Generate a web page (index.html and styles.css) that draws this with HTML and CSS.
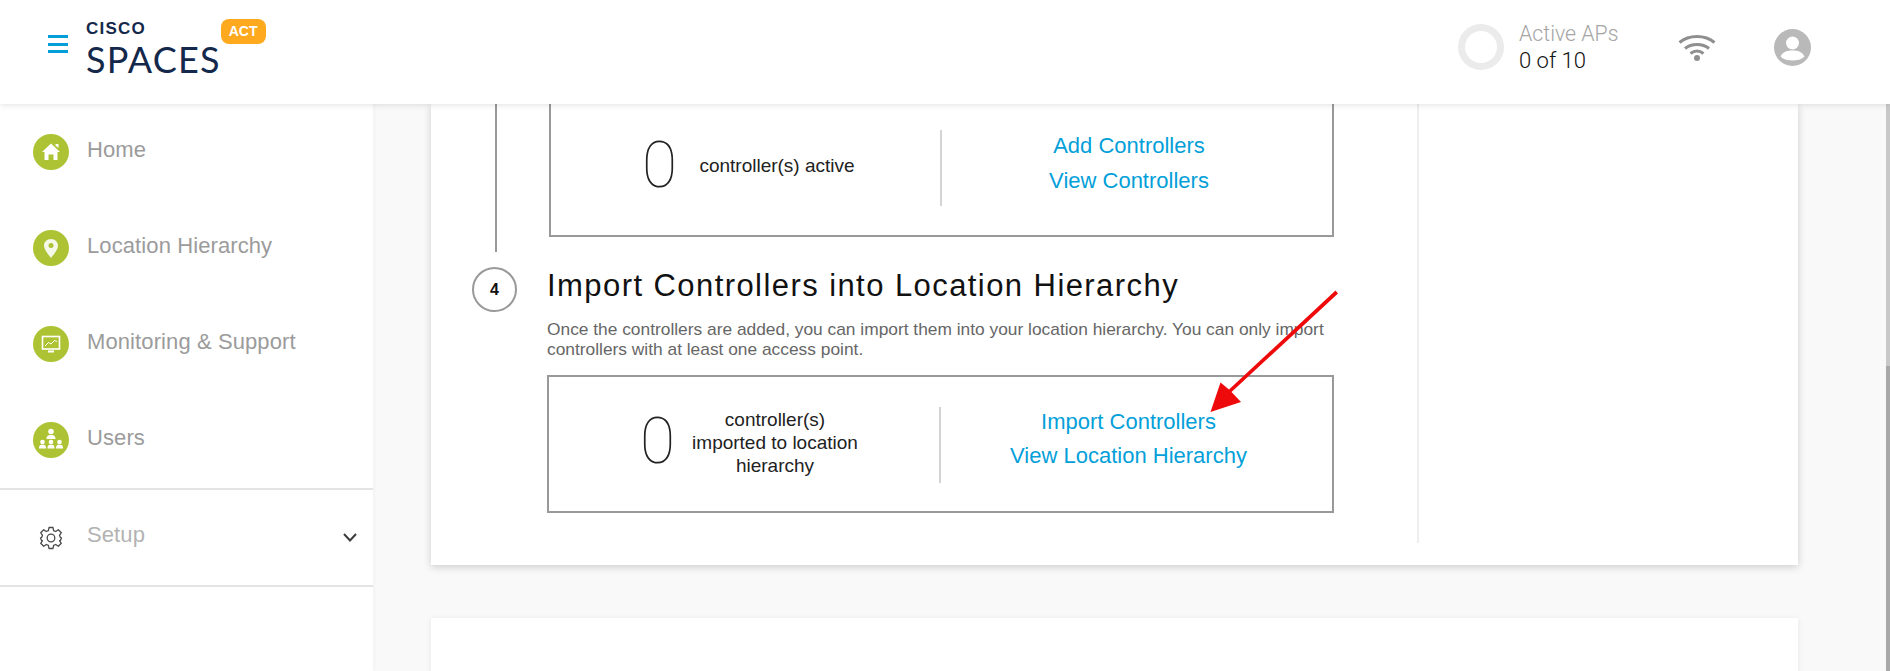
FILE: index.html
```html
<!DOCTYPE html>
<html lang="en">
<head>
    <meta charset="UTF-8">
    <meta name="viewport" content="width=device-width, initial-scale=1.0">
    <title>Cisco Spaces</title>
    <link rel="stylesheet" href="styles.css">
</head>
<body>
    <div class="header">
        <div class="brand">
            <div class="burger"><span></span><span></span><span></span></div>
            <div class="logo">
                <div class="logo-cisco">CISCO</div>
                <div class="logo-spaces">SPACES</div>
            </div>
            <div class="act-badge">ACT</div>
        </div>
        <div class="header-right">
            <div class="ap-ring"></div>
            <div class="ap-text">
                <div class="ap-label">Active APs</div>
                <div class="ap-count">0 of 10</div>
            </div>
            <svg class="wifi-icon" viewBox="0 0 38 28" width="38" height="28" fill="none" stroke="#8f8f8f" stroke-width="3">
                <path d="M1.5 9.5C11 1.5 27 1.5 36.5 9.5"/>
                <path d="M7 15.5C13.500 10 24.500 10 31 15.5"/>
                <path d="M12.500 20.500C16.500 17.500 21.500 17.500 25.500 20.500"/>
                <circle cx="19" cy="25" r="3" fill="#8f8f8f" stroke="none"/>
            </svg>
            <svg class="user-icon" viewBox="0 0 37 37" width="37" height="37">
                <circle cx="18.500" cy="18.500" r="18.500" fill="#b9b9b9"/>
                <circle cx="18.500" cy="14" r="6.500" fill="#fff"/>
                <path d="M6.500 27.500C9 22.500 13 21.500 18.500 21.500S28 22.500 30.500 27.500C27.500 30.500 23 31.500 18.500 31.500S9.500 30.500 6.500 27.500Z" fill="#fff"/>
            </svg>
        </div>
    </div>

    <div class="page">
        <div class="sidebar">
            <div class="nav-group">
                <div class="nav-item">
                    <div class="nav-icon">
                        <svg viewBox="0 0 36 36" width="36" height="36" fill="#fff">
                            <path d="M18 9.500L27 18H24.500V26H20.500V20.500H15.500V26H11.500V18H9Z"/>
                            <path d="M22.500 10H25.500V14L22.500 11.500Z"/>
                        </svg>
                    </div>
                    <span>Home</span>
                </div>
                <div class="nav-item">
                    <div class="nav-icon">
                        <svg viewBox="0 0 36 36" width="36" height="36">
                            <path d="M18 9C13.800 9 11 12 11 15.700C11 19.500 15 24 18 28C21 24 25 19.500 25 15.700C25 12 22.200 9 18 9Z" fill="#f4f8e6"/>
                            <circle cx="18" cy="15.500" r="2.500" fill="#adc334"/>
                        </svg>
                    </div>
                    <span>Location Hierarchy</span>
                </div>
                <div class="nav-item">
                    <div class="nav-icon">
                        <svg viewBox="0 0 36 36" width="36" height="36" fill="none" stroke="#fff">
                            <rect x="9.500" y="10.500" width="17" height="12.500" stroke-width="1.600"/>
                            <path d="M12 20L15.500 16.500L18 18L21.500 14.500L24 15.500" stroke-width="1"/>
                            <path d="M15 25.500H21" stroke-width="2"/>
                        </svg>
                    </div>
                    <span>Monitoring &amp; Support</span>
                </div>
                <div class="nav-item">
                    <div class="nav-icon">
                        <svg viewBox="0 0 36 36" width="36" height="36" fill="#fff">
                            <circle cx="18" cy="9.500" r="2.800"/>
                            <path d="M13.500 17C13.500 13.500 15.500 13 18 13S22.500 13.500 22.500 17Z"/>
                            <circle cx="9.500" cy="20" r="2.300"/>
                            <path d="M6 26.500C6 23 7.500 22.800 9.500 22.800S13 23 13 26.500Z"/>
                            <circle cx="18" cy="20" r="2.300"/>
                            <path d="M14.500 26.500C14.500 23 16 22.800 18 22.800S21.500 23 21.500 26.500Z"/>
                            <circle cx="26.500" cy="20" r="2.300"/>
                            <path d="M23 26.500C23 23 24.500 22.800 26.500 22.800S30 23 30 26.500Z"/>
                        </svg>
                    </div>
                    <span>Users</span>
                </div>
            </div>
            <div class="setup-row">
                <div class="nav-icon-plain">
                    <svg viewBox="0 0 24 24" width="24" height="24" fill="none" stroke="#4a4a4a" stroke-width="1.300" stroke-linejoin="round">
                        <path d="M10 1.500H14L14.600 4.600L16.700 5.500L19.300 3.700L22.300 6.700L20.500 9.300L21.400 11.400L22.500 12L21.400 14.600L20.500 14.700L22.300 17.300L19.300 20.300L16.700 18.500L14.600 19.400L14 22.500H10L9.400 19.400L7.300 18.500L4.700 20.300L1.700 17.300L3.500 14.700L2.600 14.600L1.500 12L2.600 11.400L3.500 9.300L1.700 6.700L4.700 3.700L7.300 5.500L9.400 4.600Z"/>
                        <circle cx="12" cy="12" r="3.800"/>
                    </svg>
                </div>
                <span class="setup-label">Setup</span>
                <svg class="chevron" viewBox="0 0 14 9" width="14" height="9" fill="none" stroke="#3c3c3c" stroke-width="2">
                    <path d="M1 1L7 7.500L13 1"/>
                </svg>
            </div>
        </div>

        <div class="main">
            <div class="card">
                <div class="card-body">
                    <div class="step step-top">
                        <div class="rail"><div class="rail-line"></div></div>
                        <div class="info-box info-box-cut">
                            <div class="stat">
                                <div class="stat-zero">0</div>
                                <div class="stat-label">controller(s) active</div>
                            </div>
                            <div class="links">
                                <a class="link" href="#">Add Controllers</a>
                                <a class="link" href="#">View Controllers</a>
                            </div>
                        </div>
                    </div>
                    <div class="step step-four">
                        <div class="rail"><div class="step-num">4</div></div>
                        <div>
                            <h2 class="step-title">Import Controllers into Location Hierarchy</h2>
                            <p class="step-desc">Once the controllers are added, you can import them into your location hierarchy. You can only import controllers with at least one access point.</p>
                            <div class="info-box">
                                <div class="stat">
                                    <div class="stat-zero">0</div>
                                    <div class="stat-label">controller(s) imported to location hierarchy</div>
                                </div>
                                <div class="links">
                                    <a class="link" href="#">Import Controllers</a>
                                    <a class="link" href="#">View Location Hierarchy</a>
                                </div>
                            </div>
                        </div>
                    </div>
                </div>
            </div>
            <div class="card card-next"></div>
        </div>

        <div class="scrollbar"><div class="scroll-thumb"></div></div>
    </div>

    <svg class="red-arrow" viewBox="0 0 1890 671" width="1890" height="671">
        <path d="M1335.500 290.500L1338 293.500L1231.500 392L1241 402L1210.500 412L1220.500 382.500L1229 389.500Z" fill="#ee0a0a"/>
    </svg>
</body>
</html>
```

FILE: styles.css
```css
html, body {
    margin: 0;
    padding: 0;
    height: 671px;
    overflow: hidden;
}
body {
    font-family: "Liberation Sans", Arial, sans-serif;
    background-color: #f9f9f9;
}
.header {
    position: relative;
    z-index: 2;
    display: flex;
    justify-content: space-between;
    align-items: center;
    height: 104px;
    background: #fff;
    box-shadow: 0 1px 6px rgba(0, 0, 0, 0.12);
}
.brand {
    display: flex;
    align-items: flex-start;
    height: 104px;
    padding-left: 48px;
}
.burger {
    display: flex;
    flex-direction: column;
    gap: 4.5px;
    width: 20px;
    margin-top: 35px;
}
.burger span {
    height: 3px;
    background: #049fd9;
}
.logo {
    margin-left: 18px;
    margin-top: 19px;
    color: #14284b;
}
.logo-cisco {
    font-weight: 700;
    font-size: 17px;
    line-height: 20px;
    letter-spacing: 1.2px;
}
.logo-spaces {
    font-family: "Lato", sans-serif;
    font-size: 36px;
    line-height: 40px;
    letter-spacing: 1.2px;
}
.act-badge {
    margin-top: 19px;
    width: 45px;
    height: 25px;
    border-radius: 8px;
    background: #ffa91f;
    color: #fff;
    font-size: 14px;
    font-weight: 700;
    line-height: 25px;
    text-align: center;
}
.header-right {
    display: flex;
    align-items: center;
    padding-right: 79px;
    padding-bottom: 10px;
}
.ap-ring {
    box-sizing: border-box;
    width: 46px;
    height: 46px;
    border: 7px solid #ebebeb;
    border-radius: 50%;
}
.ap-text {
    width: 159px;
    margin-left: 15px;
    font-family: "Roboto", sans-serif;
    font-weight: 300;
    line-height: 27px;
}
.ap-label {
    font-size: 21.3px;
    color: #a5a5a5;
}
.ap-count {
    font-size: 22px;
    color: #111;
}
.user-icon {
    margin-left: 58px;
}
.page {
    display: flex;
    height: 567px;
}
.sidebar {
    width: 373px;
    flex-shrink: 0;
    background: #fff;
    box-shadow: 1px 0 4px rgba(0, 0, 0, 0.04);
    color: #9b9b9b;
    font-size: 22px;
    letter-spacing: 0.1px;
}
.nav-group {
    display: flex;
    flex-direction: column;
    gap: 60px;
    padding: 30px 0 0 33px;
    box-sizing: border-box;
    border-bottom: 2px solid #e4e4e4;
    height: 386px;
}
.nav-item {
    display: flex;
    align-items: center;
    gap: 18px;
    height: 36px;
}
.nav-item span {
    position: relative;
    top: -2px;
}
.nav-icon {
    width: 36px;
    height: 36px;
    border-radius: 50%;
    background: #adc334;
}
.setup-row {
    display: flex;
    align-items: center;
    height: 95px;
    padding-left: 39px;
    border-bottom: 2px solid #e4e4e4;
    color: #b3b3b3;
}
.setup-label {
    margin-bottom: 5px;
}
.nav-icon-plain {
    width: 24px;
    height: 24px;
    margin-right: 24px;
}
.chevron {
    margin-left: auto;
    margin-right: 16px;
}
.main {
    flex: 1;
    padding: 0 88px 0 58px;
}
.card {
    display: flex;
    height: 461px;
    background: #fff;
    box-shadow: 0 2px 8px rgba(0, 0, 0, 0.18);
}
.card-next {
    height: 60px;
    margin-top: 53px;
    box-shadow: 0 1px 6px rgba(0, 0, 0, 0.08);
}
.card-body {
    box-sizing: border-box;
    width: 988px;
    height: 439px;
    padding-left: 41px;
    border-right: 2px solid #eee;
}
.step {
    display: grid;
    grid-template-columns: 75px 787px;
}
.step-four {
    margin-top: 15px;
}
.rail-line {
    width: 2px;
    height: 148px;
    margin-left: 23px;
    background: #999;
}
.step-num {
    box-sizing: border-box;
    width: 45px;
    height: 45px;
    border: 2px solid #999;
    border-radius: 50%;
    font-size: 16px;
    font-weight: 700;
    line-height: 41px;
    text-align: center;
    color: #111;
}
.step-title {
    margin: 0;
    font-size: 31px;
    font-weight: 400;
    line-height: 38px;
    letter-spacing: 1.43px;
    color: #111;
}
.step-desc {
    margin: 14px 0 16px;
    font-size: 17.35px;
    line-height: 20px;
    color: #666;
}
.info-box {
    display: flex;
    box-sizing: border-box;
    height: 138px;
    border: 2px solid #999;
    align-items: center;
}
.info-box-cut {
    height: 133px;
    margin-left: 2px;
    border-top: none;
}
.stat {
    display: flex;
    align-items: center;
    box-sizing: border-box;
    width: 392px;
    height: 76px;
    padding-left: 91px;
    border-right: 2px solid #d4d4d4;
    margin-top: 1px;
    font-size: 19px;
    line-height: 23px;
    color: #222;
}
.info-box-cut .stat {
    margin-top: -3px;
    width: 391px;
}
.stat-zero {
    width: 49px;
    margin-bottom: 5px;
    font-family: "Roboto", sans-serif;
    font-weight: 100;
    font-size: 64px;
    line-height: 60px;
    color: #222;
}
.stat-label {
    width: 172px;
    margin-bottom: 5px;
    text-align: center;
}
.links {
    flex: 1;
    display: flex;
    flex-direction: column;
    align-items: center;
    gap: 9px;
    padding-right: 16px;
    padding-bottom: 11px;
}
.info-box-cut .links {
    gap: 10px;
    padding-bottom: 8px;
    margin-top: -5px;
}
.link {
    font-size: 22px;
    line-height: 25px;
    color: #049fd9;
    text-decoration: none;
}
.scrollbar {
    display: flex;
    flex-direction: column;
    width: 4px;
    background: #c8c8c8;
}
.scroll-thumb {
    height: 305px;
    margin-top: auto;
    background: #a8a8a8;
}
.red-arrow {
    position: absolute;
    top: 0;
    left: 0;
    z-index: 3;
    pointer-events: none;
}
```
